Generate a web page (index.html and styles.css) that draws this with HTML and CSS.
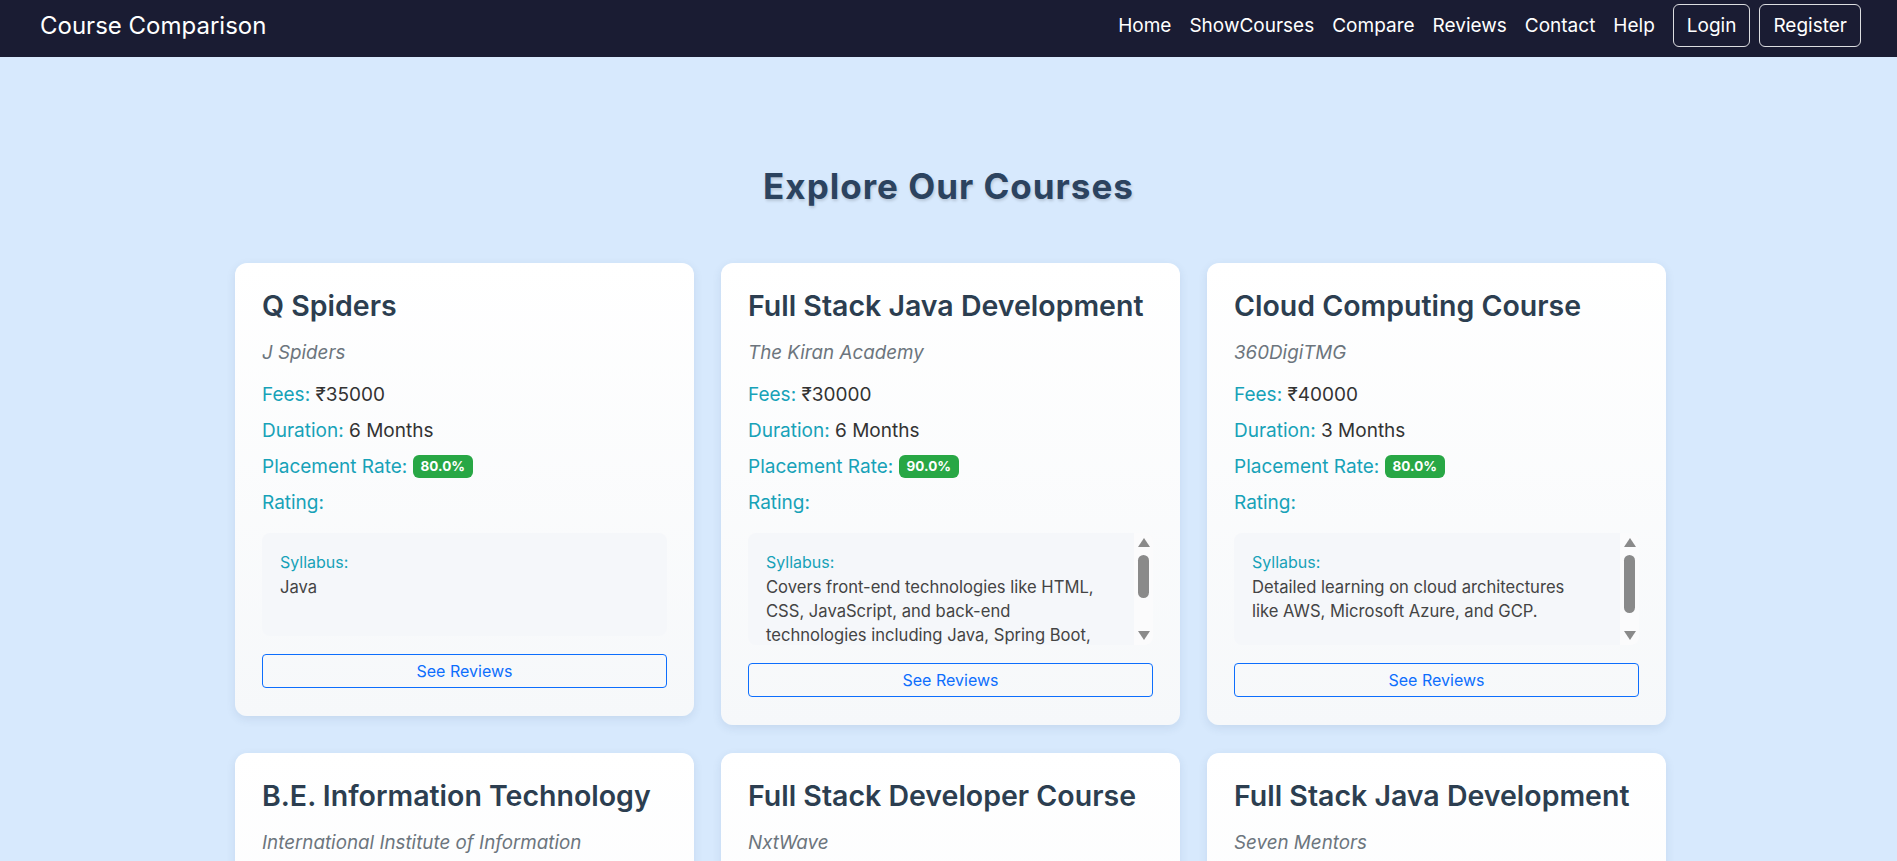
FILE: index.html
```html
<!DOCTYPE html>
<html lang="en">
<head>
<meta charset="utf-8">
<title>Course Comparison</title>
<link rel="stylesheet" href="styles.css">
</head>
<body>
<nav class="navbar">
  <a class="brand" href="#">Course Comparison</a>
  <div class="nav-right">
    <ul class="nav-links">
      <li><a href="#">Home</a></li>
      <li><a href="#">ShowCourses</a></li>
      <li><a href="#">Compare</a></li>
      <li><a href="#">Reviews</a></li>
      <li><a href="#">Contact</a></li>
      <li><a href="#">Help</a></li>
    </ul>
    <a class="nav-btn" href="#">Login</a>
    <a class="nav-btn" href="#">Register</a>
  </div>
</nav>

<main class="page">
  <h1 class="page-title">Explore Our Courses</h1>
  <div class="course-grid">
    <article class="course-card">
      <h2 class="course-title">Q Spiders</h2>
      <p class="course-institute">J Spiders</p>
      <p class="course-info"><span class="info-label">Fees:</span> ₹35000</p>
      <p class="course-info"><span class="info-label">Duration:</span> 6 Months</p>
      <p class="course-info"><span class="info-label">Placement Rate:</span> <span class="badge">80.0%</span></p>
      <p class="course-info"><span class="info-label">Rating:</span></p>
      <div class="syllabus">
        <div class="syllabus-body">
          <p class="syllabus-label">Syllabus:</p>
          <p class="syllabus-text">Java</p>
        </div>
      </div>
      <button class="btn-reviews" type="button">See Reviews</button>
    </article>

    <article class="course-card">
      <h2 class="course-title">Full Stack Java Development</h2>
      <p class="course-institute">The Kiran Academy</p>
      <p class="course-info"><span class="info-label">Fees:</span> ₹30000</p>
      <p class="course-info"><span class="info-label">Duration:</span> 6 Months</p>
      <p class="course-info"><span class="info-label">Placement Rate:</span> <span class="badge">90.0%</span></p>
      <p class="course-info"><span class="info-label">Rating:</span></p>
      <div class="syllabus">
        <div class="syllabus-body">
          <p class="syllabus-label">Syllabus:</p>
          <p class="syllabus-text">Covers front-end technologies like HTML, CSS, JavaScript, and back-end technologies including Java, Spring Boot, and Hibernate, along with database management using MySQL.</p>
        </div>
        <div class="scrollbar" aria-hidden="true">
          <span class="scroll-arrow scroll-up"></span>
          <span class="scroll-track"><span class="scroll-thumb" style="height: 43px"></span></span>
          <span class="scroll-arrow scroll-down"></span>
        </div>
      </div>
      <button class="btn-reviews" type="button">See Reviews</button>
    </article>

    <article class="course-card">
      <h2 class="course-title">Cloud Computing Course</h2>
      <p class="course-institute">360DigiTMG</p>
      <p class="course-info"><span class="info-label">Fees:</span> ₹40000</p>
      <p class="course-info"><span class="info-label">Duration:</span> 3 Months</p>
      <p class="course-info"><span class="info-label">Placement Rate:</span> <span class="badge">80.0%</span></p>
      <p class="course-info"><span class="info-label">Rating:</span></p>
      <div class="syllabus">
        <div class="syllabus-body">
          <p class="syllabus-label">Syllabus:</p>
          <p class="syllabus-text">Detailed learning on cloud architectures like AWS, Microsoft Azure, and GCP.</p>
        </div>
        <div class="scrollbar" aria-hidden="true">
          <span class="scroll-arrow scroll-up"></span>
          <span class="scroll-track"><span class="scroll-thumb" style="height: 58px"></span></span>
          <span class="scroll-arrow scroll-down"></span>
        </div>
      </div>
      <button class="btn-reviews" type="button">See Reviews</button>
    </article>

    <article class="course-card">
      <h2 class="course-title">B.E. Information Technology</h2>
      <p class="course-institute">International Institute of Information Technology (I Square IT) Pune</p>
      <p class="course-info"><span class="info-label">Fees:</span> ₹150000</p>
      <p class="course-info"><span class="info-label">Duration:</span> 4 Years</p>
      <p class="course-info"><span class="info-label">Placement Rate:</span> <span class="badge">85.0%</span></p>
      <p class="course-info"><span class="info-label">Rating:</span></p>
      <div class="syllabus">
        <div class="syllabus-body">
          <p class="syllabus-label">Syllabus:</p>
          <p class="syllabus-text">Programming, data structures, networks and databases.</p>
        </div>
      </div>
      <button class="btn-reviews" type="button">See Reviews</button>
    </article>

    <article class="course-card">
      <h2 class="course-title">Full Stack Developer Course</h2>
      <p class="course-institute">NxtWave</p>
      <p class="course-info"><span class="info-label">Fees:</span> ₹45000</p>
      <p class="course-info"><span class="info-label">Duration:</span> 8 Months</p>
      <p class="course-info"><span class="info-label">Placement Rate:</span> <span class="badge">85.0%</span></p>
      <p class="course-info"><span class="info-label">Rating:</span></p>
      <div class="syllabus">
        <div class="syllabus-body">
          <p class="syllabus-label">Syllabus:</p>
          <p class="syllabus-text">HTML, CSS, JavaScript, React and Node.js.</p>
        </div>
      </div>
      <button class="btn-reviews" type="button">See Reviews</button>
    </article>

    <article class="course-card">
      <h2 class="course-title">Full Stack Java Development</h2>
      <p class="course-institute">Seven Mentors</p>
      <p class="course-info"><span class="info-label">Fees:</span> ₹35000</p>
      <p class="course-info"><span class="info-label">Duration:</span> 6 Months</p>
      <p class="course-info"><span class="info-label">Placement Rate:</span> <span class="badge">80.0%</span></p>
      <p class="course-info"><span class="info-label">Rating:</span></p>
      <div class="syllabus">
        <div class="syllabus-body">
          <p class="syllabus-label">Syllabus:</p>
          <p class="syllabus-text">Core Java, Spring Boot, Hibernate and SQL.</p>
        </div>
      </div>
      <button class="btn-reviews" type="button">See Reviews</button>
    </article>
  </div>
</main>
</body>
</html>
```

FILE: styles.css
```css
* {
  box-sizing: border-box;
}

body {
  margin: 0;
  background: #d7e9fd;
  font-family: "Inter", "Noto Sans", "DejaVu Sans", sans-serif;
  color: #333;
}

/* ---------- navbar ---------- */
.navbar {
  height: 57px;
  background: #1a1c33;
  display: flex;
  align-items: center;
  justify-content: space-between;
  padding: 0 36px 7px 40px;
}

.brand {
  color: #fff;
  text-decoration: none;
  font-size: 24px;
  font-weight: 400;
}

.nav-right {
  display: flex;
  align-items: center;
}

.nav-links {
  display: flex;
  list-style: none;
  margin: 0;
  padding: 0;
}

.nav-links a {
  display: block;
  padding: 0 9px;
  color: #fff;
  text-decoration: none;
  font-size: 19px;
}

.nav-btn {
  display: flex;
  align-items: center;
  height: 43px;
  padding: 0 13px;
  margin-left: 9px;
  border: 1px solid rgba(255, 255, 255, 0.85);
  border-radius: 6px;
  color: #fff;
  text-decoration: none;
  font-size: 19px;
}

/* ---------- page ---------- */
.page {
  padding: 108px 0 40px;
}

.page-title {
  margin: 0 0 56px;
  text-align: center;
  font-size: 35px;
  line-height: 42px;
  letter-spacing: 1px;
  font-weight: 700;
  color: #2c435f;
  text-shadow: 1px 2px 3px rgba(0, 0, 0, 0.15);
}

.course-grid {
  width: 1431px;
  margin: 0 auto;
  display: grid;
  grid-template-columns: repeat(3, 459px);
  column-gap: 27px;
  row-gap: 28px;
  align-items: start;
  position: relative;
  left: 2px;
}

.course-card {
  background: linear-gradient(180deg, #ffffff 0%, #f6f8fa 100%);
  border-radius: 12px;
  box-shadow: 0 3px 10px rgba(40, 70, 110, 0.10);
  padding: 25px 27px 28px;
}

.course-title {
  margin: 0 0 16px;
  font-size: 28.5px;
  line-height: 35px;
  font-weight: 600;
  color: #2c3e50;
}

.course-institute {
  margin: 0 0 15px;
  font-size: 18.8px;
  line-height: 27px;
  font-style: italic;
  color: #6c757d;
}

.course-info {
  margin: 0 0 9px;
  font-size: 19px;
  line-height: 27px;
  color: #333;
}

.info-label {
  color: #17a2b8;
}

.badge {
  display: inline-block;
  vertical-align: 2px;
  padding: 0 8px;
  height: 23px;
  line-height: 23px;
  border-radius: 6px;
  background: #28a745;
  color: #fff;
  font-size: 13.5px;
  font-weight: 700;
}

/* ---------- syllabus box ---------- */
.syllabus {
  margin-top: 17px;
  max-height: 112px;
  overflow: hidden;
  display: flex;
  align-items: flex-start;
  background: #f5f7fa;
  border-radius: 8px;
}

.syllabus-body {
  flex: 1;
  padding: 17px 28px 18px 18px;
}

.syllabus-label {
  margin: 0;
  font-size: 16px;
  line-height: 25px;
  color: #17a2b8;
}

.syllabus-text {
  margin: 0 0 19px;
  font-size: 16.6px;
  line-height: 24px;
  color: #444;
}

.scrollbar {
  flex: 0 0 19px;
  height: 112px;
  display: flex;
  flex-direction: column;
  align-items: center;
  background: #fbfbfc;
}

.scroll-arrow {
  flex: 0 0 19px;
  display: flex;
  align-items: center;
  justify-content: center;
}

.scroll-arrow::before {
  content: "";
  width: 0;
  height: 0;
  border-left: 6.5px solid transparent;
  border-right: 6.5px solid transparent;
}

.scroll-up::before {
  border-bottom: 9px solid #8a8a8a;
}

.scroll-down::before {
  border-top: 9px solid #8a8a8a;
}

.scroll-track {
  flex: 1;
  padding-top: 3px;
  display: flex;
  justify-content: center;
}

.scroll-thumb {
  width: 11px;
  border-radius: 6px;
  background: #8a8a8a;
}

.btn-reviews {
  display: block;
  width: 100%;
  height: 34px;
  margin-top: 18px;
  background: transparent;
  border: 1px solid #0d6efd;
  border-radius: 4px;
  color: #0d6efd;
  font-family: inherit;
  font-size: 16px;
  cursor: pointer;
}
```
